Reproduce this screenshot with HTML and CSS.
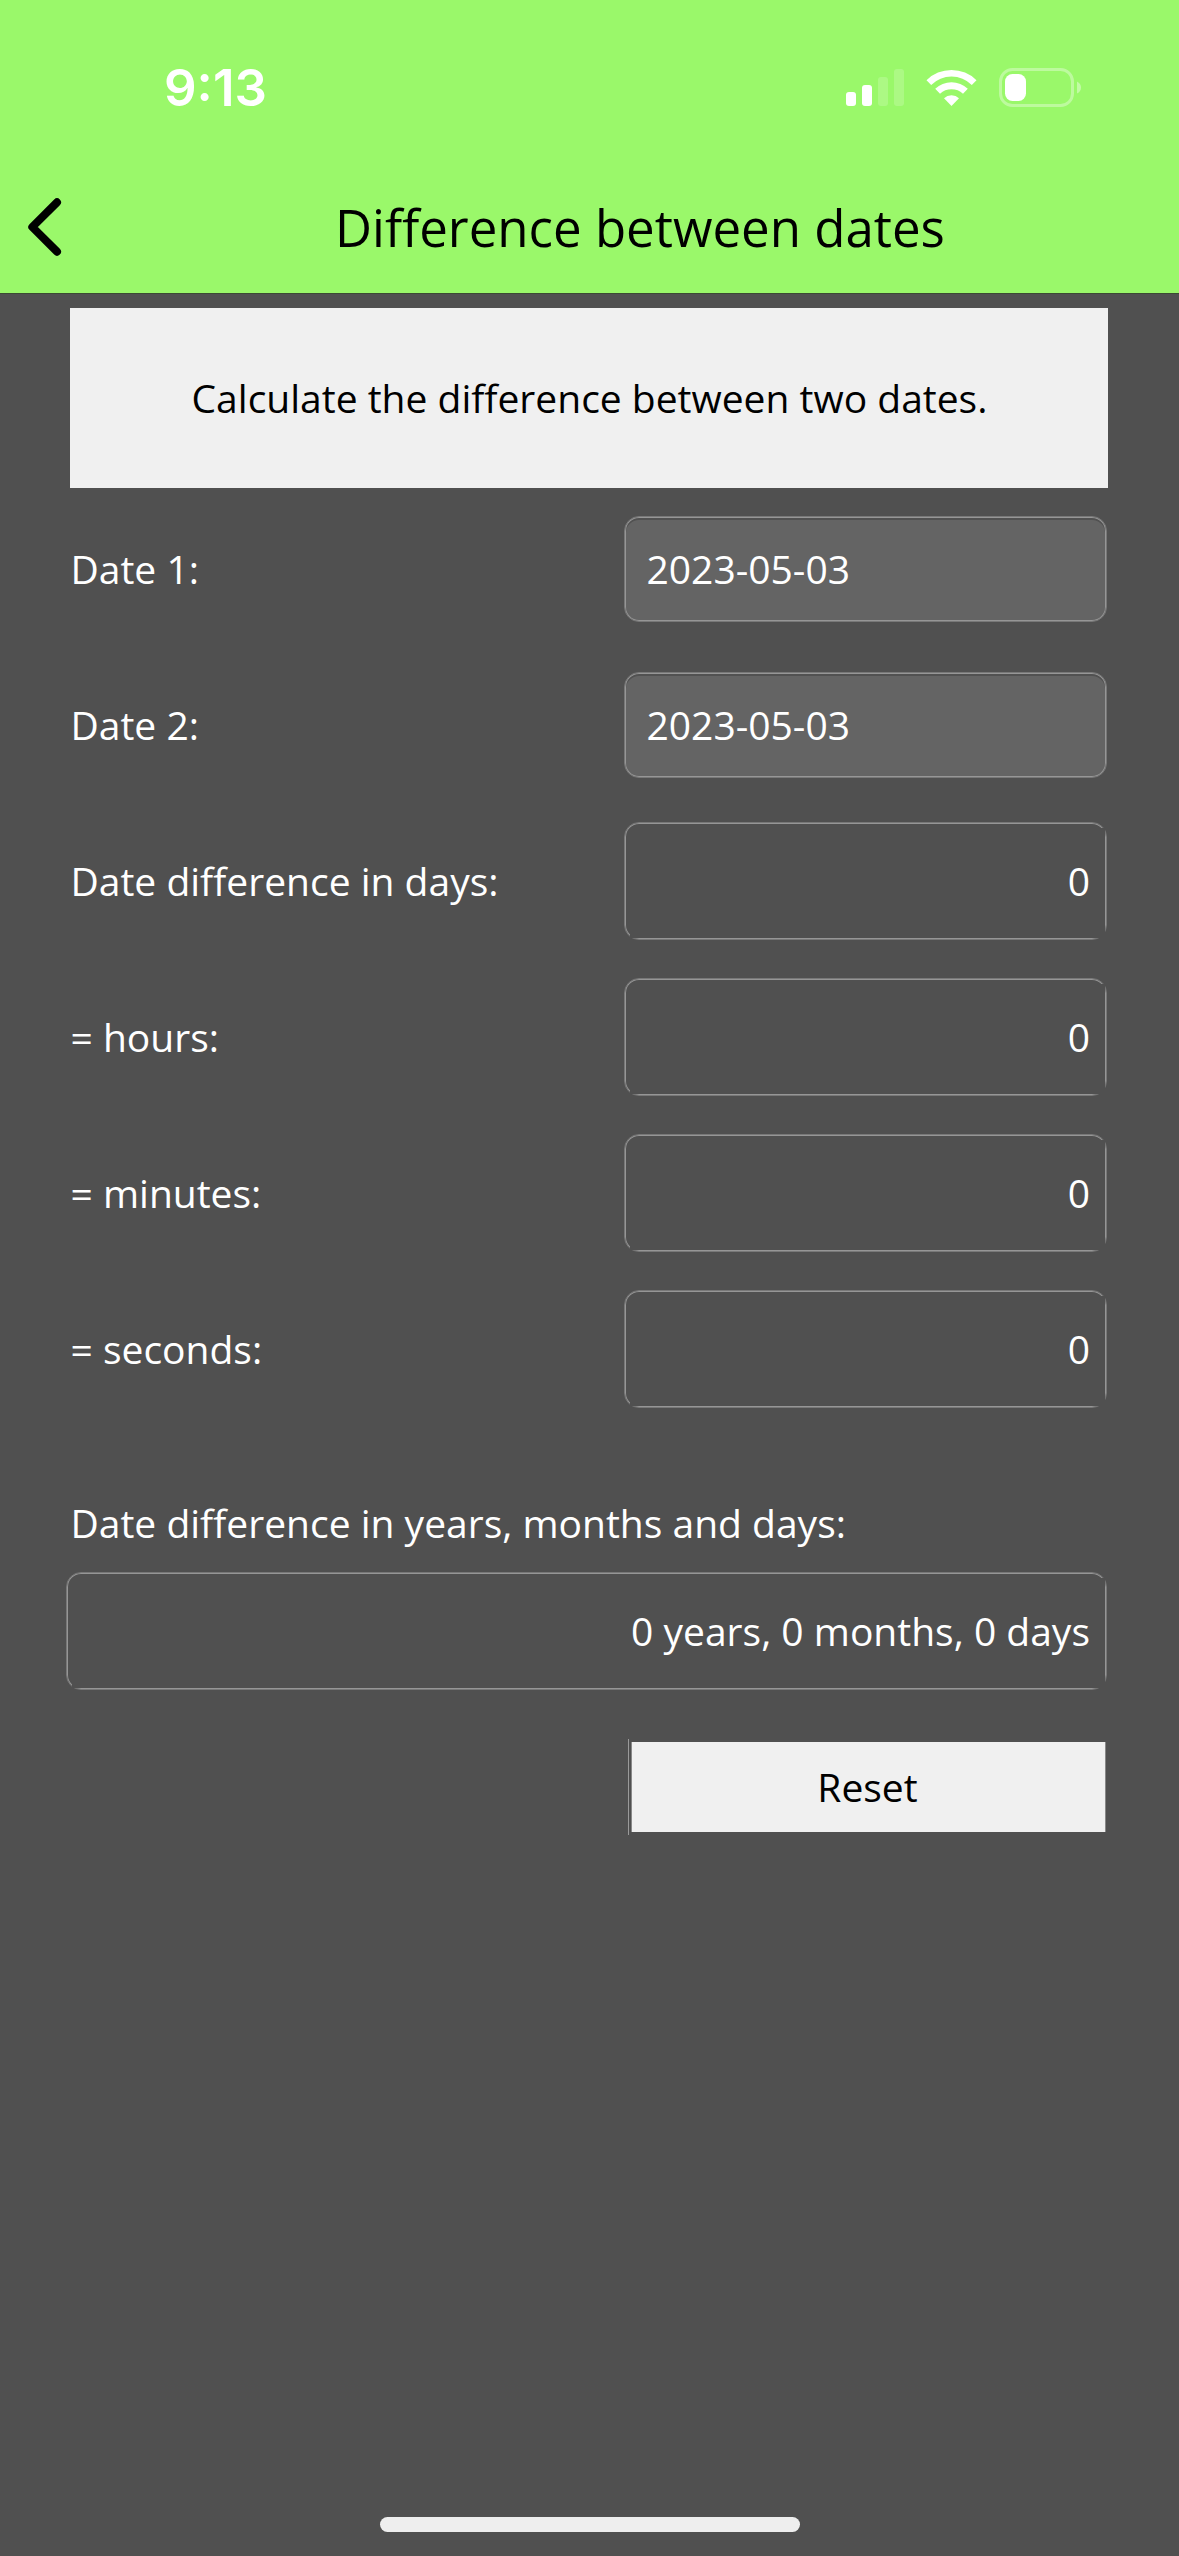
FILE: index.html
```html
<!DOCTYPE html>
<html lang="en">
<head>
<meta charset="utf-8">
<title>Difference between dates</title>
<link rel="stylesheet" href="styles.css">
</head>
<body>
<div class="screen">
  <header class="header">
    <div class="status">
      <span class="time">9:13</span>
      <svg class="status-icons" width="236" height="40" viewBox="0 0 236 40" fill="#fff">
        <rect x="0" y="24" width="10" height="14" rx="3"/>
        <rect x="16" y="17" width="10" height="21" rx="3"/>
        <rect x="32" y="9" width="10" height="29" rx="3" opacity=".18"/>
        <rect x="48" y="1" width="10" height="37" rx="3" opacity=".18"/>
        <path d="M80.5 12.2A35.500 35.500 0 0 1 130.500 12.200L125.800 16.900A29 29 0 0 0 85.200 16.900Z"/>
        <path d="M89.200 20.800A23.500 23.500 0 0 1 121.800 20.800L117 25.800A17 17 0 0 0 94 25.800Z"/>
        <path d="M98 30.200A11 11 0 0 1 113 30.200L105.500 38Z"/>
        <rect x="154.500" y="1.500" width="72" height="36" rx="12" fill="none" stroke="#fff" stroke-width="3" opacity=".35"/>
        <rect x="159" y="6" width="21" height="27" rx="7.500"/>
        <path d="M231 13.500Q235 15.500 235 19.500T231 25.500Z" opacity=".4"/>
      </svg>
    </div>
    <div class="nav">
      <svg class="back" width="40" height="64" viewBox="0 0 40 64" fill="none" stroke="#000" stroke-width="8" stroke-linecap="round" stroke-linejoin="round">
        <path d="M33 7.300L8.300 32L33 56.700"/>
      </svg>
      <h1 class="title">Difference between dates</h1>
    </div>
  </header>
  <main class="content">
    <p class="intro">Calculate the difference between two dates.</p>
    <div class="row"><span class="label">Date 1:</span><div class="input">2023-05-03</div></div>
    <div class="row"><span class="label">Date 2:</span><div class="input">2023-05-03</div></div>
    <div class="row"><span class="label">Date difference in days:</span><div class="output"><span class="value">0</span></div></div>
    <div class="row"><span class="label">= hours:</span><div class="output"><span class="value">0</span></div></div>
    <div class="row"><span class="label">= minutes:</span><div class="output"><span class="value">0</span></div></div>
    <div class="row"><span class="label">= seconds:</span><div class="output"><span class="value">0</span></div></div>
    <div class="summary-label">Date difference in years, months and days:</div>
    <div class="output output-wide"><span class="value">0 years, 0 months, 0 days</span></div>
    <div class="actions"><button class="reset" type="button">Reset</button></div>
  </main>
  <footer class="footer"><div class="home-bar"></div></footer>
</div>
</body>
</html>
```

FILE: styles.css
```css
* {
  box-sizing: border-box;
}

body {
  margin: 0;
  background: #505050;
}

.screen {
  width: 1179px;
  height: 2556px;
  display: flex;
  flex-direction: column;
  background: #505050;
  color: #fff;
  font-family: "Open Sans", sans-serif;
  font-size: 39px;
  line-height: 54px;
}

.header {
  height: 294px;
  background: #9af86a;
  border-bottom: 1px solid #3b4a33;
  display: flex;
  flex-direction: column;
}

.status {
  height: 160px;
  padding: 68px 97px 0 164px;
  display: flex;
  justify-content: space-between;
  align-items: flex-start;
}

.time {
  font-family: Inter, sans-serif;
  font-weight: 600;
  font-size: 51px;
  line-height: 40px;
}

.status-icons {
  display: block;
}

.nav {
  flex: 1;
  display: flex;
  align-items: center;
  padding-left: 24px;
}

.back {
  flex: none;
}

.title {
  margin: 1px 0 0 271px;
  font-weight: 400;
  font-size: 51px;
  line-height: 70px;
  color: #000;
  white-space: nowrap;
}

.content {
  flex: 1;
  padding: 14px 71px 0 70px;
}

.intro {
  height: 180px;
  margin: 0 0 3px;
  padding-left: 1px;
  background: #f0f0f0;
  color: #000;
  display: flex;
  align-items: center;
  justify-content: center;
}

.row {
  height: 156px;
  display: grid;
  grid-template-columns: 554px 483px;
  align-items: center;
}

.label,
.summary-label {
  padding-left: 0.5px;
  white-space: nowrap;
}

.input,
.output {
  border: 1px solid #787878;
  border-radius: 15px;
  box-shadow: inset 0 0 0 1px #969696;
}

.input {
  height: 106px;
  padding: 0 21.5px;
  display: flex;
  align-items: center;
  background: #646464;
  box-shadow: inset 0 0 0 1px #969696, inset 0 2px 0 1px #515151;
}

.output {
  height: 118px;
  padding: 5px 1px 1px 5px;
}

.value {
  height: 100%;
  padding: 0 15px 4px 0;
  display: flex;
  align-items: center;
  justify-content: flex-end;
  background: #505050;
}

.summary-label {
  height: 98px;
  margin-top: 47px;
  display: flex;
  align-items: center;
}

.output-wide {
  width: 1041px;
  margin-left: -4px;
}

.actions {
  margin: 49px 2px 0 0;
  display: flex;
  justify-content: flex-end;
}

.actions::before {
  content: "";
  width: 1px;
  height: 96px;
  margin-right: 2px;
  background: #9a9a9a;
}

.reset {
  width: 475px;
  height: 90px;
  margin: 3px 0;
  padding: 0 2px 0 0;
  border: 0 solid #888;
  border-width: 0 1px;
  background: #f0f0f0;
  color: #000;
  font: inherit;
}

.footer {
  height: 39px;
  display: flex;
  justify-content: center;
  padding-left: 1px;
}

.home-bar {
  width: 420px;
  height: 15px;
  border-radius: 8px;
  background: #eee;
}
```
